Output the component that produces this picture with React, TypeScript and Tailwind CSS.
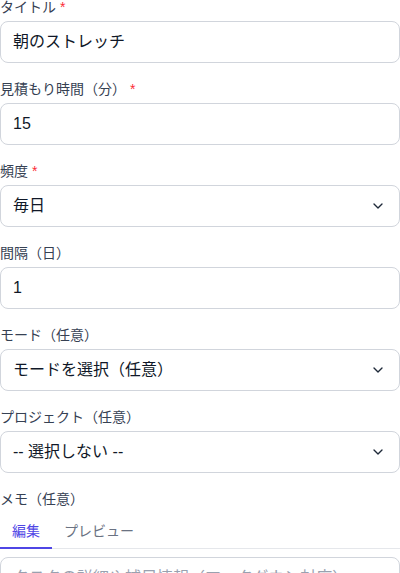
import { ChevronDown } from "lucide-react";

const inputCls =
  "block w-full rounded-lg border border-gray-300 bg-white px-3 py-2 text-base text-gray-900 placeholder-gray-400 focus:outline-none";

function Label({ text, required }: { text: string; required?: boolean }) {
  return (
    <label className="mb-1 block text-sm text-gray-700">
      {text}
      {required && <span className="ml-1 text-red-500">*</span>}
    </label>
  );
}

function Select({ value }: { value: string }) {
  return (
    <div className="relative">
      <div className={`${inputCls} pr-10`}>{value}</div>
      <ChevronDown
        size={16}
        strokeWidth={2}
        className="pointer-events-none absolute right-[14px] top-1/2 -translate-y-1/2 text-gray-800"
      />
    </div>
  );
}

export default function App() {
  return (
    <div
      className="-mt-[3px] flex flex-col gap-4 bg-white"
      style={{ fontFamily: '"Liberation Sans", "Noto Sans CJK JP", sans-serif' }}
    >
      <div>
        <Label text="タイトル" required />
        <input className={inputCls} defaultValue="朝のストレッチ" />
      </div>
      <div>
        <Label text="見積もり時間（分）" required />
        <input className={inputCls} defaultValue="15" />
      </div>
      <div>
        <Label text="頻度" required />
        <Select value="毎日" />
      </div>
      <div>
        <Label text="間隔（日）" />
        <input className={inputCls} defaultValue="1" />
      </div>
      <div>
        <Label text="モード（任意）" />
        <Select value="モードを選択（任意）" />
      </div>
      <div>
        <Label text="プロジェクト（任意）" />
        <Select value="-- 選択しない --" />
      </div>
      <div>
        <Label text="メモ（任意）" />
        <div className="flex h-9 border-b border-gray-200">
          <button
            type="button"
            className="-mb-px flex h-9 items-center border-b-2 border-[#4f46e5] px-3 pt-[2px] text-sm leading-5 text-[#4f46e5]"
          >
            編集
          </button>
          <button
            type="button"
            className="-mb-px flex h-9 items-center border-b-2 border-transparent px-3 pt-[2px] text-sm leading-5 text-gray-500"
          >
            プレビュー
          </button>
        </div>
        <textarea
          rows={4}
          className={`${inputCls} mt-2 resize-none`}
          placeholder="タスクの詳細や補足情報（マークダウン対応）"
        />
      </div>
    </div>
  );
}
